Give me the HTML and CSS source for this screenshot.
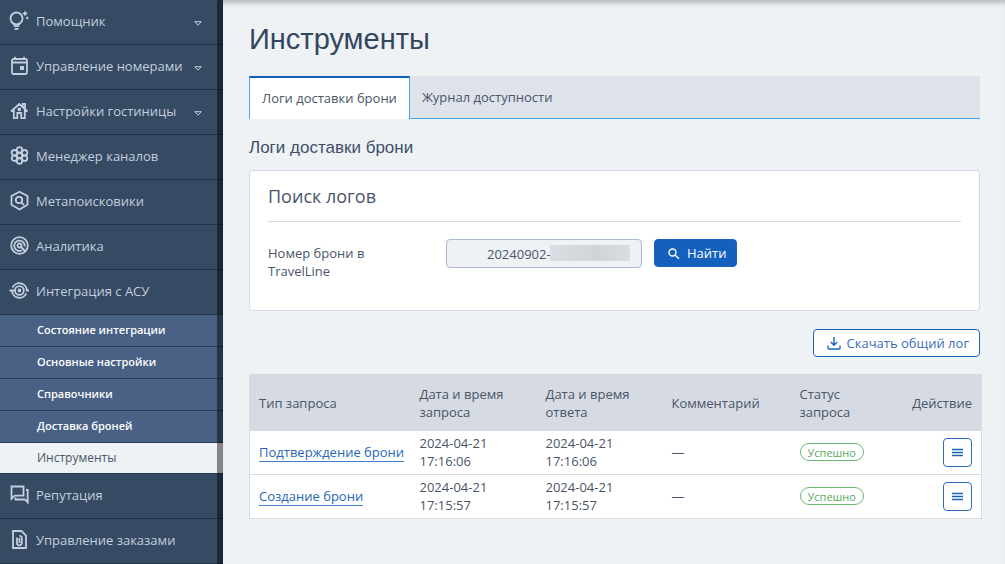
FILE: index.html
```html
<!DOCTYPE html>
<html lang="ru">
<head>
  <meta charset="UTF-8">
  <title>Инструменты</title>
  <link rel="stylesheet" href="styles.css">
</head>
<body>

<!-- Боковое меню -->
<nav class="sidebar">
  <a href="#" class="nav-item">
    <svg class="nav-icon" viewBox="0 0 20 20"><circle cx="7.500" cy="7.500" r="6"/><path d="M5 15.200h5M5.500 17.800h4M5 12.500v2M10 12.500v2"/><path class="solid" d="M16-.5l1 2 2 1-2 1-1 2-1-2-2-1 2-1zM18.300 5.200l.7 1.100 1 .7-1 .7-.7 1.100-.7-1.100-1-.7 1-.7z"/></svg>
    <span>Помощник</span>
    <svg class="arrow" viewBox="0 0 8 5"><path d="M.8.700h6.400L4 4.200z"/></svg>
  </a>
  <a href="#" class="nav-item">
    <svg class="nav-icon" viewBox="0 0 20 20"><rect x="3" y="3" width="15" height="15" rx="1.500"/><path d="M3 6.500h15M6 .8V3M15 .8V3"/><path class="solid" d="M11 10h4v4h-4z"/></svg>
    <span>Управление номерами</span>
    <svg class="arrow" viewBox="0 0 8 5"><path d="M.8.700h6.400L4 4.200z"/></svg>
  </a>
  <a href="#" class="nav-item">
    <svg class="nav-icon" viewBox="0 0 20 20"><path d="M2 10.500l8.300-7.500 8.200 7.500M4.800 8.500v8.700h3.500V12h3.900v5.200h3.600V8.500M16 8V3h-2.200v2.500"/><circle cx="10.300" cy="8.300" r="1"/></svg>
    <span>Настройки гостиницы</span>
    <svg class="arrow" viewBox="0 0 8 5"><path d="M.8.700h6.400L4 4.200z"/></svg>
  </a>
  <a href="#" class="nav-item">
    <svg class="nav-icon" viewBox="0 0 20 20"><circle cx="10.500" cy="9.500" r="2.700"/><circle cx="10.500" cy="3.900" r="2.700"/><circle cx="10.500" cy="15.100" r="2.700"/><circle cx="5.400" cy="6.700" r="2.700"/><circle cx="15.600" cy="6.700" r="2.700"/><circle cx="5.400" cy="12.300" r="2.700"/><circle cx="15.600" cy="12.300" r="2.700"/></svg>
    <span>Менеджер каналов</span>
  </a>
  <a href="#" class="nav-item">
    <svg class="nav-icon" viewBox="0 0 20 20"><path d="M10.500.8l8 4.200v8.800l-8 4.700-8-4.700V5z"/><circle cx="10" cy="9" r="3.200"/><path d="M12.300 11.300l2.700 2.700"/></svg>
    <span>Метапоисковики</span>
  </a>
  <a href="#" class="nav-item">
    <svg class="nav-icon" viewBox="0 0 20 20"><circle cx="10.500" cy="9.500" r="8.300"/><path d="M13 14.300A5.200 5.200 0 1 1 15.600 10.500"/><circle cx="10.500" cy="9.500" r="2"/><path d="M11.500 10.500l5 5"/></svg>
    <span>Аналитика</span>
  </a>
  <a href="#" class="nav-item">
    <svg class="nav-icon" viewBox="0 0 20 20"><path d="M3.500 6.500A7.500 7.500 0 0 1 17.800 9.500H20M17.300 12.500A7.500 7.500 0 0 1 3 9.500H.5M3 9.500h3"/><circle cx="10.400" cy="9.500" r="4.400"/><circle cx="10.400" cy="9.500" r="1"/></svg>
    <span>Интеграция с АСУ</span>
  </a>

  <div class="submenu">
    <a href="#">Состояние интеграции</a>
    <a href="#">Основные настройки</a>
    <a href="#">Справочники</a>
    <a href="#">Доставка броней</a>
    <a href="#" class="active">Инструменты</a>
  </div>

  <a href="#" class="nav-item">
    <svg class="nav-icon" viewBox="0 0 20 20"><path d="M2.500 1.500h12v9.200H5.700l-3.200 3.100z"/><path d="M17 5h1.700v12.500l-2.800-3H6.500v-2"/></svg>
    <span>Репутация</span>
  </a>
  <a href="#" class="nav-item">
    <svg class="nav-icon" viewBox="0 0 20 20"><path d="M4 1h8.500l4.500 4.500V18H4z"/><path d="M8 7.500V13a2.400 2.400 0 0 0 4.800 0V8a2 2 0 0 0-2.400-2M10.400 8v5"/></svg>
    <span>Управление заказами</span>
  </a>
</nav>

<main class="content">
  <h1>Инструменты</h1>

  <div class="tabs">
    <a href="#" class="tab tab-active">Логи доставки брони</a>
    <a href="#" class="tab">Журнал доступности</a>
  </div>

  <h2>Логи доставки брони</h2>

  <!-- Поиск -->
  <form class="card">
    <h3>Поиск логов</h3>
    <div class="search-row">
      <label for="booking">Номер брони в TravelLine</label>
      <div class="booking-field">
        <input type="text" id="booking" value="20240902-">
        <span class="mask"></span>
      </div>
      <button type="button" class="btn btn-primary">
        <svg class="search-icon" viewBox="0 0 12 12"><circle cx="4.500" cy="5.500" r="3.500"/><path d="M7 8l4 3.800"/></svg>
        Найти
      </button>
    </div>
  </form>

  <div class="toolbar">
    <button type="button" class="btn btn-outline">
      <svg class="download-icon" viewBox="0 0 14 14"><path d="M7 1v8M3.800 6L7 9.200 10.200 6M1 9.500V12q0 1 1 1h10q1 0 1-1V9.500"/></svg>
      Скачать общий лог
    </button>
  </div>

  <div class="logs-wrap">
    <table class="logs">
      <thead>
        <tr>
          <th class="col-type">Тип запроса</th>
          <th class="col-date">Дата и время запроса</th>
          <th class="col-date">Дата и время ответа</th>
          <th class="col-comment">Комментарий</th>
          <th class="col-status">Статус запроса</th>
          <th class="col-action">Действие</th>
        </tr>
      </thead>
      <tbody>
        <tr>
          <td><a href="#" class="log-link">Подтверждение брони</a></td>
          <td>2024-04-21 17:16:06</td>
          <td>2024-04-21 17:16:06</td>
          <td>—</td>
          <td><span class="badge">Успешно</span></td>
          <td class="col-action"><button type="button" class="btn-menu" aria-label="Действия"><svg viewBox="0 0 11 9"><path d="M0 1.500h11M0 4.500h11M0 7.500h11"/></svg></button></td>
        </tr>
        <tr>
          <td><a href="#" class="log-link">Создание брони</a></td>
          <td>2024-04-21 17:15:57</td>
          <td>2024-04-21 17:15:57</td>
          <td>—</td>
          <td><span class="badge">Успешно</span></td>
          <td class="col-action"><button type="button" class="btn-menu" aria-label="Действия"><svg viewBox="0 0 11 9"><path d="M0 1.500h11M0 4.500h11M0 7.500h11"/></svg></button></td>
        </tr>
      </tbody>
    </table>
  </div>
</main>

</body>
</html>
```

FILE: styles.css
```css
* {
  box-sizing: border-box;
}
body {
  margin: 0;
  display: flex;
  min-height: 100vh;
  background: #eef2f5;
  color: #4a5568;
  font-family: "Open Sans", "Noto Sans", sans-serif;
  font-size: 13px;
  line-height: 18px;
}
a {
  text-decoration: none;
}
svg {
  fill: none;
  stroke: currentColor;
}

/* sidebar */
.sidebar {
  position: relative;
  flex: 0 0 223px;
  background: #364a63;
}
.sidebar::after {
  content: "";
  position: absolute;
  top: 0;
  right: 0;
  bottom: 0;
  width: 6px;
  background: rgba(0, 0, 0, 0.45);
}
.nav-item {
  display: flex;
  align-items: center;
  height: 45px;
  padding: 0 21px 2px 9px;
  border-bottom: 1px solid #24344b;
  color: #c3cede;
  font-weight: 500;
}
.nav-icon {
  width: 20px;
  height: 20px;
  margin-right: 7px;
  stroke-width: 1.8;
}
.nav-icon .solid {
  fill: currentColor;
  stroke: none;
}
.arrow {
  width: 8px;
  height: 5px;
  margin-top: 5px;
  margin-left: auto;
}
.submenu a {
  display: block;
  height: 32px;
  padding-left: 37px;
  border-bottom: 1px solid #2a3d58;
  background: #486185;
  color: #fff;
  font-size: 11px;
  font-weight: 600;
  line-height: 30px;
}
.submenu .active {
  height: 31px;
  background: #eef2f5;
  color: #4a5568;
  font-size: 12px;
  font-weight: 400;
}

/* content */
.content {
  flex: 1;
  min-width: 0;
  padding: 19px 25px 40px 26px;
  box-shadow: inset 0 6px 5px -3px #b4b8bc;
}
h1, h2, h3 {
  margin: 0;
  font-weight: 400;
}
h1 {
  margin-bottom: 17px;
  color: #34465f;
  font-family: "Liberation Sans", Arial, sans-serif;
  font-size: 29px;
  line-height: 40px;
}
h2 {
  margin: 19px 0 12px;
  color: #3f506a;
  font-family: "Liberation Sans", Arial, sans-serif;
  font-size: 17px;
  line-height: 20px;
}
.tabs {
  display: flex;
  height: 43px;
  background: #dee2eb;
  border-bottom: 1px solid #4da3e8;
}
.tab {
  height: 43px;
  padding: 0 12px;
  color: #4a5568;
  line-height: 43px;
}
.tab-active {
  background: #fff;
  border: 1px solid #4da3e8;
  border-top: 2px solid #1160b8;
  border-bottom: 0;
  line-height: 40px;
}

.card {
  height: 141px;
  padding: 12px 18px;
  background: #fff;
  border: 1px solid #d3dae6;
  border-radius: 4px;
}
h3 {
  padding-bottom: 12px;
  border-bottom: 1px solid #d3d7e3;
  font-size: 18px;
  line-height: 26px;
}
.search-row {
  display: flex;
  align-items: flex-start;
  padding-top: 17px;
}
.search-row label {
  width: 178px;
  padding: 5px 60px 0 0;
}
.booking-field {
  position: relative;
  width: 196px;
  margin-right: 12px;
}
.booking-field input {
  width: 100%;
  height: 29px;
  padding: 0 0 0 40px;
  background: #eef2f5;
  border: 1px solid #a9b9d3;
  border-radius: 4px;
  color: #4a5568;
  font: inherit;
}
.mask {
  position: absolute;
  top: 6px;
  right: 12px;
  width: 80px;
  height: 16px;
  background: linear-gradient(90deg, #dadde1, #d0d3d8 60%, #d9dce0);
}

.btn {
  display: flex;
  align-items: center;
  height: 28px;
  padding: 0 10px 0 13px;
  border: 1px solid #1a63bd;
  border-radius: 4px;
  font: inherit;
}
.btn-primary {
  background: #1460bd;
  color: #fff;
}
.search-icon {
  width: 12px;
  height: 12px;
  margin-right: 7px;
  stroke-width: 1.4;
}
.toolbar {
  display: flex;
  justify-content: flex-end;
  margin: 18px 0 17px;
}
.btn-outline {
  background: #fff;
  color: #3c6cb8;
}
.download-icon {
  width: 14px;
  height: 14px;
  margin-right: 6px;
  color: #1a63bd;
  stroke-width: 1.4;
}

/* log table */
.logs-wrap {
  margin-right: -2px;
}
.logs {
  width: 100%;
  table-layout: fixed;
  border-collapse: collapse;
  background: #fff;
  border: 1px solid #d6dae2;
}
.logs th, .logs td {
  padding: 3px 9px 4px;
  text-align: left;
  font-weight: 400;
}
.logs th {
  padding: 10px 9px;
  background: #d6dae2;
}
.logs td {
  border-bottom: 1px solid #d6dae2;
}
.logs .col-type {
  width: 161px;
}
.logs .col-date {
  width: 126px;
  padding-right: 25px;
}
.logs .col-comment {
  width: 128px;
}
.logs .col-status {
  width: 100px;
}
.logs .col-action {
  text-align: right;
}
.log-link {
  color: #2a66b8;
  border-bottom: 1px solid #3f7fd0;
  white-space: nowrap;
}
.badge {
  display: inline-block;
  height: 18px;
  padding: 0 7px;
  border: 1px solid #6cba72;
  border-radius: 9px;
  color: #5aa861;
  font-size: 11px;
  line-height: 17px;
}
.btn-menu {
  display: inline-flex;
  align-items: center;
  justify-content: center;
  width: 29px;
  height: 29px;
  padding: 0;
  background: #fff;
  border: 1px solid #2a6cc0;
  border-radius: 4px;
  color: #1a63bd;
  vertical-align: middle;
}
.btn-menu svg {
  width: 11px;
  height: 9px;
  stroke-width: 1.3;
}
```
